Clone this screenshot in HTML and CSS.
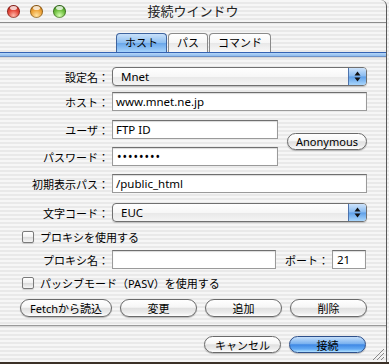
FILE: index.html
```html
<!DOCTYPE html>
<html lang="ja">
<head>
<meta charset="utf-8">
<title>接続ウインドウ</title>
<link rel="stylesheet" href="styles.css">
</head>
<body>
<div class="window">
  <div class="titlebar">
    <div class="lights">
      <span class="light red"></span><span class="light yellow"></span><span class="light green"></span>
    </div>
    <div class="title">接続ウインドウ</div>
    <div></div>
  </div>

  <div class="tabs">
    <div class="tab active">ホスト</div>
    <div class="tab">パス</div>
    <div class="tab">コマンド</div>
  </div>

  <div class="tabbox">
    <div class="band"></div>
    <div class="form">
      <div class="row r1">
        <span class="lbl">設定名：</span>
        <div class="select wide"><span class="sel-text">Mnet</span><span class="arrows"><svg width="7" height="11" viewBox="0 0 7 11"><polygon points="0.5,4.5 3.5,0.5 6.5,4.5" fill="#111"/><polygon points="0.5,6.5 3.5,10.5 6.5,6.5" fill="#111"/></svg></span></div>
      </div>
      <div class="row r2">
        <span class="lbl">ホスト：</span>
        <div class="field wide">www.mnet.ne.jp</div>
      </div>
      <div class="group">
        <div class="group-fields">
          <div class="row">
            <span class="lbl">ユーザ：</span>
            <div class="field mid">FTP ID</div>
          </div>
          <div class="row r-pass">
            <span class="lbl">パスワード：</span>
            <div class="field mid dots">••••••••</div>
          </div>
        </div>
        <div class="btn anon">Anonymous</div>
      </div>
      <div class="row r4">
        <span class="lbl">初期表示パス：</span>
        <div class="field wide">/public_html</div>
      </div>
      <div class="row r5">
        <span class="lbl">文字コード：</span>
        <div class="select wide"><span class="sel-text">EUC</span><span class="arrows"><svg width="7" height="11" viewBox="0 0 7 11"><polygon points="0.5,4.5 3.5,0.5 6.5,4.5" fill="#111"/><polygon points="0.5,6.5 3.5,10.5 6.5,6.5" fill="#111"/></svg></span></div>
      </div>
      <div class="check-row r6">
        <span class="checkbox"></span><span class="check-label">プロキシを使用する</span>
      </div>
      <div class="row r7">
        <span class="lbl">プロキシ名：</span>
        <div class="field proxy"></div>
        <span class="port-lbl">ポート：</span>
        <div class="field port">21</div>
      </div>
      <div class="check-row r8">
        <span class="checkbox"></span><span class="check-label">パッシブモード（PASV）を使用する</span>
      </div>
      <div class="btn-row">
        <div class="btn b-fetch">Fetchから読込</div>
        <div class="btn b-std">変更</div>
        <div class="btn b-std">追加</div>
        <div class="btn b-std">削除</div>
      </div>
    </div>
  </div>

  <div class="footer">
    <div class="btn b-std foot">キャンセル</div>
    <div class="btn b-std foot default">接続</div>
  </div>

  <svg class="grip" width="11" height="11" viewBox="0 0 11 11">
    <line x1="11" y1="0" x2="0" y2="11" stroke="#8a8a8a" stroke-width="1"/>
    <line x1="11" y1="4" x2="4" y2="11" stroke="#8a8a8a" stroke-width="1"/>
    <line x1="11" y1="8" x2="8" y2="11" stroke="#8a8a8a" stroke-width="1"/>
  </svg>
</div>
</body>
</html>
```

FILE: styles.css
```css
* { box-sizing: border-box; margin: 0; padding: 0; }

html, body { width: 389px; height: 364px; overflow: hidden; }

body {
  background:
    linear-gradient(to bottom, transparent 362px, #3b3127 362px),
    repeating-linear-gradient(to bottom, #f6f6f6 0 2px, #e9e9e9 2px 4px);
  font-family: "Noto Sans", "Noto Sans CJK JP", sans-serif;
  color: #000;
}

.window {
  width: 387px;
  height: 362px;
  border-right: 1px solid #5a5a5a;
  border-radius: 0 6px 0 0;
  background: repeating-linear-gradient(to bottom, #f6f6f6 0 2px, #e9e9e9 2px 4px);
  position: relative;
  overflow: hidden;
}

/* title bar */
.titlebar {
  height: 23px;
  border-bottom: 1px solid #8c8c8c;
  display: grid;
  grid-template-columns: 1fr auto 1fr;
  align-items: center;
}
.lights { display: flex; gap: 10px; padding-left: 7px; padding-top: 1px; }
.light {
  width: 13px; height: 13px; border-radius: 50%;
  position: relative;
  box-shadow: inset 0 0 0 1px rgba(0,0,0,0.35);
}
.light::after {
  content: ""; position: absolute; left: 3px; top: 1px; width: 7px; height: 4px;
  border-radius: 50%; background: rgba(255,255,255,0.75);
}
.red { background: radial-gradient(circle at 50% 80%, #ffb7a8 0, #e5483a 45%, #a8201a 100%); }
.yellow { background: radial-gradient(circle at 50% 80%, #ffe2a0 0, #eea43a 45%, #b06a10 100%); }
.green { background: radial-gradient(circle at 50% 80%, #d4ffb0 0, #70c040 45%, #2f7a16 100%); }
.title { font-size: 13px; line-height: 22px; color: #222; }

/* tabs */
.tabs {
  display: flex; justify-content: center; gap: 1px;
  margin-top: 10px; height: 19px; padding-left: 1px;
}
.tab {
  height: 19px; padding: 0 8px;
  border: 1px solid #8a8a8a; border-bottom: none;
  border-radius: 4px 4px 0 0;
  font-size: 11px; line-height: 18px;
  background: linear-gradient(#ffffff, #f6f6f6 50%, #e8e8e8 52%, #f8f8f8);
}
.tab.active {
  border-color: #3f649e;
  background: linear-gradient(#c9e1fa, #8fbff0 48%, #6aa7ea 52%, #a6d3fb);
}

/* tab box */
.tabbox {
  border-bottom: 1px solid #9a9a9a;
  box-shadow: 0 1px 0 #d8d8d8;
}
.band {
  height: 5px;
  border-top: 1px solid #3463b3;
  border-bottom: 1px solid #6e92c7;
  background: linear-gradient(#b6d6f7, #8dbcee);
  box-shadow: 0 1px 0 rgba(0,0,0,0.12);
}
.form { padding: 10px 0 8px 0; display: flex; flex-direction: column; }

.row { display: flex; align-items: center; height: 19px; }
.lbl { width: 109px; text-align: right; font-size: 11px; margin-right: 3px; white-space: nowrap; }
.r2 { margin-top: 6px; }
.group { display: flex; align-items: center; margin-top: 9px; }
.group-fields { display: flex; flex-direction: column; }
.r-pass { margin-top: 8px; }
.r4 { margin-top: 8px; }
.r5 { margin-top: 10px; }
.r6 { margin-top: 6px; }
.r7 { margin-top: 4px; }
.r8 { margin-top: 5px; }

.field {
  height: 19px;
  background: #fff;
  border: 1px solid #9a9a9a;
  border-top-color: #6f6f6f;
  box-shadow: inset 0 1px 1px rgba(0,0,0,0.15);
  font-size: 11.5px; line-height: 17px;
  padding-left: 3px;
  white-space: nowrap;
}
.wide { width: 255px; }
.mid { width: 166px; }
.proxy { width: 164px; }
.port { width: 34px; padding-left: 4px; }
.port-lbl { font-size: 11px; margin-left: 9px; margin-right: 3px; white-space: nowrap; }
.dots { font-size: 12px; letter-spacing: 1px; padding-left: 4px; }

.select {
  height: 19px; display: flex; align-items: stretch;
  border: 1px solid #707070; border-radius: 4px;
  background: linear-gradient(#ffffff, #f7f7f7 50%, #e8e8e8 52%, #f4f4f4);
  box-shadow: 0 1px 1px rgba(0,0,0,0.18);
  overflow: hidden;
}
.sel-text { flex: 1; font-size: 11.5px; line-height: 17px; padding-left: 8px; }
.arrows {
  width: 18px; display: flex; align-items: center; justify-content: center;
  border-left: 1px solid #4d73ad;
  background: linear-gradient(#cde3fb, #89bbf0 48%, #5e9fe8 52%, #a9d6fc);
}

.check-row { display: flex; align-items: center; height: 18px; padding-left: 22px; gap: 6px; }
.checkbox {
  width: 12px; height: 12px;
  border: 1px solid #7a7a7a; border-radius: 2px;
  background: linear-gradient(#ffffff, #f0f0f0 50%, #dcdcdc 55%, #f6f6f6);
  box-shadow: 0 1px 1px rgba(0,0,0,0.15);
}
.check-label { font-size: 11px; white-space: nowrap; }

/* buttons */
.btn {
  height: 18px; display: flex; align-items: center; justify-content: center;
  border: 1px solid #6a6a6a; border-radius: 9px;
  background: linear-gradient(#ffffff, #f6f6f6 45%, #e0e0e0 52%, #ececec 80%, #ffffff);
  box-shadow: 0 1px 1px rgba(0,0,0,0.25);
  font-size: 11px; white-space: nowrap;
}
.anon { width: 80px; height: 17px; margin-left: 9px; margin-bottom: 3px; }
.btn-row { display: flex; gap: 8px; padding-left: 20px; margin-top: 7px; }
.b-fetch { width: 92px; }
.b-std { width: 77px; }

.footer { display: flex; justify-content: flex-end; gap: 8px; padding: 10px 20px 0 0; }
.foot { height: 17px; }
.default {
  border-color: #2d4f8a;
  background: linear-gradient(#c7e0fb, #79b1ef 45%, #3f88e4 52%, #63aaf4 80%, #b3e2ff);
}

.grip { position: absolute; right: 2px; bottom: 2px; }
```
